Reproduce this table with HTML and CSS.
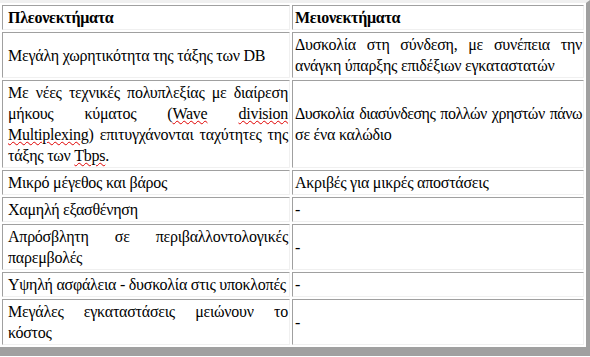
FILE: index.html
```html
<!DOCTYPE html>
<html lang="el">
<head>
<meta charset="utf-8">
<title>Πλεονεκτήματα - Μειονεκτήματα</title>
<link rel="stylesheet" href="styles.css">
</head>
<body>
<table class="compare">
  <colgroup><col class="col-a"><col class="col-b"></colgroup>
  <tr>
    <th class="pro">Πλεονεκτήματα</th>
    <th class="con">Μειονεκτήματα</th>
  </tr>
  <tr>
    <td class="pro">Μεγάλη χωρητικότητα της τάξης των DB</td>
    <td class="con">Δυσκολία στη σύνδεση, με συνέπεια την ανάγκη ύπαρξης επιδέξιων εγκαταστατών</td>
  </tr>
  <tr>
    <td class="pro">Με νέες τεχνικές πολυπλεξίας με διαίρεση μήκους κύματος (<span class="spell">Wave</span> <span class="spell">division</span> <span class="spell">Multiplexing</span>) επιτυγχάνονται ταχύτητες της τάξης των <span class="spell">Tbps</span>.</td>
    <td class="con"><span class="line tight">Δυσκολία διασύνδεσης πολλών χρηστών πάνω</span> σε ένα καλώδιο</td>
  </tr>
  <tr>
    <td class="pro">Μικρό μέγεθος και βάρος</td>
    <td class="con">Ακριβές για μικρές αποστάσεις</td>
  </tr>
  <tr>
    <td class="pro">Χαμηλή εξασθένηση</td>
    <td class="con">-</td>
  </tr>
  <tr>
    <td class="pro">Απρόσβλητη σε περιβαλλοντολογικές παρεμβολές</td>
    <td class="con">-</td>
  </tr>
  <tr>
    <td class="pro">Υψηλή ασφάλεια - δυσκολία στις υποκλοπές</td>
    <td class="con">-</td>
  </tr>
  <tr>
    <td class="pro"><span class="line">Μεγάλες εγκαταστάσεις μειώνουν το</span> κόστος</td>
    <td class="con">-</td>
  </tr>
</table>
</body>
</html>
```
FILE: styles.css
```css
html, body {
  margin: 0;
  padding: 0;
  background: #ffffff;
}

.compare {
  width: 590px;
  table-layout: fixed;
  border-collapse: separate;
  border-spacing: 2px;
  border-top: 3px solid #f0f0f0;
  border-right: 4px solid #a0a0a0;
  border-bottom: 9px solid #a0a0a0;
  border-left: 0;
  background: #ffffff;
  font-family: "Liberation Serif", "Times New Roman", serif;
  font-size: 16px;
  letter-spacing: -0.25px;
  line-height: 21px;
  color: #000000;
}

.col-a { width: 288px; }

.compare th,
.compare td {
  border-top: 1px solid #a0a0a0;
  border-left: 1px solid #a0a0a0;
  border-right: 1px solid #f0f0f0;
  border-bottom: 1px solid #f0f0f0;
  vertical-align: middle;
  text-align: justify;
  padding: 1px 1px 1px 2px;
}

.compare th {
  font-weight: bold;
  text-align: left;
}

.compare .pro {
  padding-left: 5px;
}

.line {
  display: block;
  text-align: justify;
  text-align-last: justify;
}

.tight {
  white-space: nowrap;
  letter-spacing: -0.5px;
  word-spacing: -1px;
}

.spell {
  text-decoration: underline wavy #e00000;
  text-decoration-thickness: 1px;
  text-underline-offset: 1px;
}
```
